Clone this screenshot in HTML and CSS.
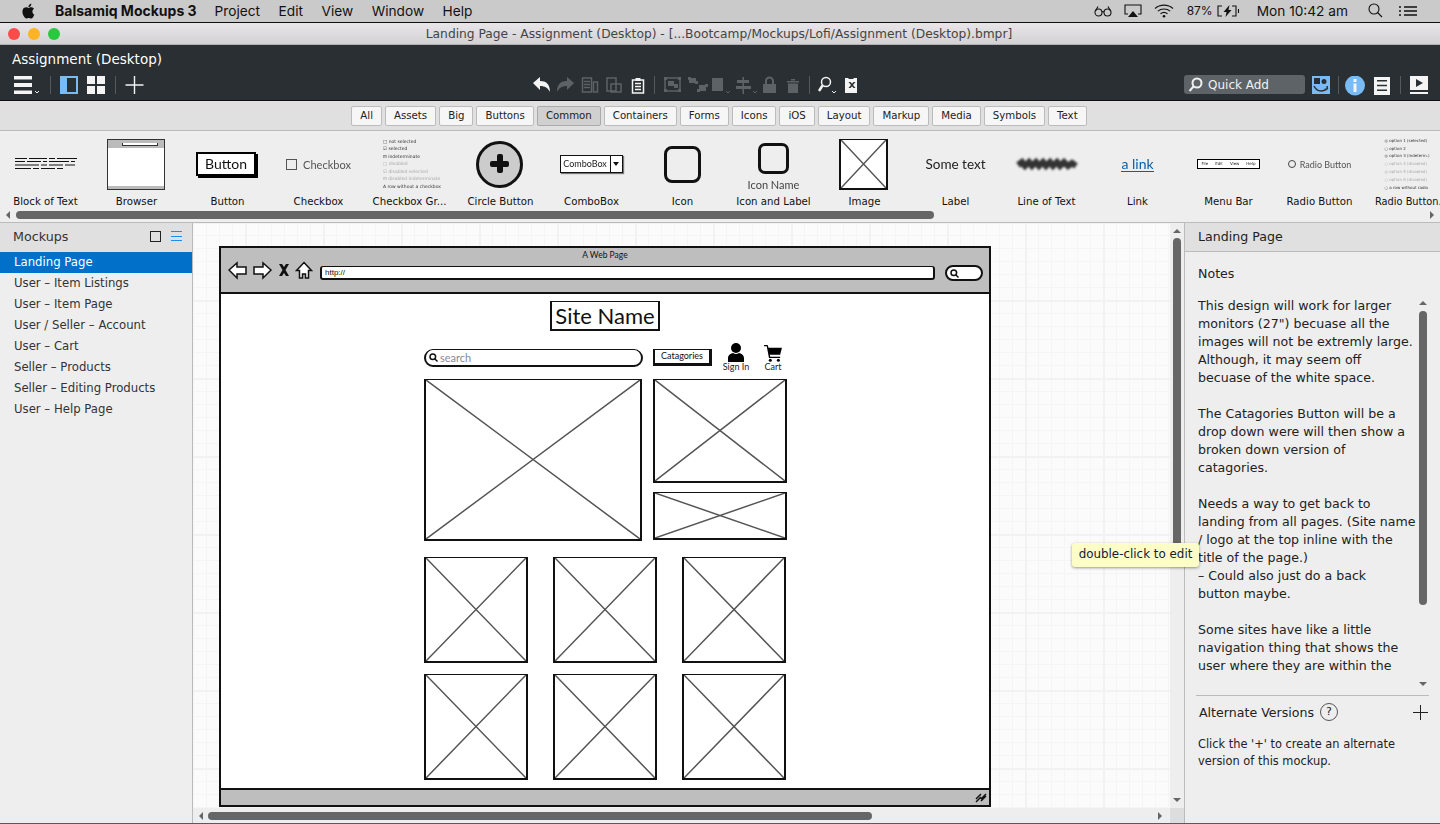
FILE: index.html
```html
<!DOCTYPE html>
<html lang="en">

<head>
    <meta charset="UTF-8">
    <meta name="viewport" content="width=device-width, initial-scale=1.0">
    <title>Balsamiq Mockups 3</title>
    <link rel="stylesheet" href="styles.css">
</head>

<body>
    <!-- Mac menu bar -->
    <div class="menubar">
        <svg class="apple" viewBox="0 0 14 16" width="14" height="16">
            <path d="M11.4 8.5c0-1.8 1.5-2.7 1.6-2.7-.9-1.3-2.2-1.5-2.7-1.5-1.1-.1-2.2.7-2.8.7-.6 0-1.5-.7-2.4-.7-1.3 0-2.4.7-3.1 1.8-1.3 2.3-.3 5.7 1 7.5.6.9 1.4 1.9 2.3 1.9.9 0 1.3-.6 2.4-.6 1.1 0 1.4.6 2.4.6 1 0 1.6-.9 2.2-1.8.7-1 1-2 1-2.1-.1 0-1.9-.7-1.9-3.1zM9.6 3.1c.5-.6.8-1.5.7-2.3-.7 0-1.6.5-2.1 1.1-.5.5-.9 1.4-.8 2.2.8.1 1.7-.4 2.2-1z" />
        </svg>
        <span class="menu-app">Balsamiq Mockups 3</span>
        <span class="menu-item">Project</span>
        <span class="menu-item">Edit</span>
        <span class="menu-item">View</span>
        <span class="menu-item">Window</span>
        <span class="menu-item">Help</span>
        <div class="menu-right">
            <svg width="18" height="12" viewBox="0 0 18 12" class="tray-svg">
                <circle cx="4.5" cy="7.5" r="3.5" />
                <circle cx="13.5" cy="7.5" r="3.5" />
                <path d="M8 7c.6-.6 1.4-.6 2 0M1.5 6L4 1.5M16.5 6L14 1.5" />
            </svg>
            <svg width="18" height="14" viewBox="0 0 18 14" class="tray-svg airplay">
                <path d="M4 10H1V1h16v9h-3" />
                <path class="solid" d="M9 7l5 6H4z" />
            </svg>
            <svg width="20" height="14" viewBox="0 0 20 14" class="tray-svg wifi">
                <path d="M1 4.5c5-4.5 13-4.5 18 0M3.8 7.2c3.5-3 8.9-3 12.4 0M6.5 9.8c2-1.6 5-1.6 7 0" />
                <circle class="solid" cx="10" cy="12.3" r="1.3" />
            </svg>
            <span class="battery-text">87%</span>
            <svg width="23" height="12" viewBox="0 0 23 12" class="tray-svg battery">
                <path d="M5 1H1v10h4M15 1h4v10h-4M21.5 4v4" />
                <path class="solid" d="M12.5 0L6.5 7h3l-1 5 6-7h-3z" />
            </svg>
            <span class="clock">Mon 10:42 am</span>
            <svg width="15" height="15" viewBox="0 0 15 15" class="tray-svg search-tray">
                <circle cx="6" cy="6" r="5" />
                <path d="M9.5 9.5L14 14" />
            </svg>
            <svg width="18" height="10" viewBox="0 0 18 10" class="tray-svg list-tray">
                <path d="M5 1h13M5 5h13M5 9h13M0 1h2M0 5h2M0 9h2" />
            </svg>
        </div>
    </div>

    <!-- Window title -->
    <div class="titlebar">
        <span class="light red"></span>
        <span class="light yellow"></span>
        <span class="light green"></span>
        <span class="title-text">Landing Page - Assignment (Desktop) - [...Bootcamp/Mockups/Lofi/Assignment (Desktop).bmpr]</span>
    </div>

    <!-- Dark toolbar -->
    <div class="toolbar">
        <div class="project-name">Assignment (Desktop)</div>
        <div class="tool-row">
            <svg class="tools-left" width="130" height="20" viewBox="0 0 130 20">
                <path class="w" d="M0 0h18v3.5H0zM0 7h18v4H0zM0 14.5h18V18H0z" />
                <path class="chev" d="M21 15l2 2 2-2" />
                <path class="sep" d="M36.5 0v18M101.5 0v18" />
                <path class="blue" d="M46 0h18v18H46zM53 2v14h9V2z" fill-rule="evenodd" />
                <path class="w" d="M73 0h8v8h-8zM83 0h8v8h-8zM73 10h8v8h-8zM83 10h8v8h-8z" />
                <path class="w" d="M119.8 0h1.4v8.3h8.3v1.4h-8.3V18h-1.4V9.7h-8.3V8.3h8.3z" />
            </svg>
            <svg class="tools-center" width="328" height="20" viewBox="0 0 328 20">
                <path class="w" d="M0 7L7 1v4c6 0 10 3 10 11-2-4-5-6-10-6v4z" />
                <path class="g" d="M41 7l-7-6v4c-6 0-10 3-10 11 2-4 5-6 10-6v4z" />
                <path class="gs" d="M49.5 2h9v14h-9zM51 5.5h6M51 8.5h6M51 11.5h6M60.5 6h4v10h-4z" />
                <path class="gs" d="M74 2h9v13h-9zM78 8h10v8H78z" />
                <path class="ws" d="M99.5 4h11v13h-11zM102 7.5h6M102 10.5h6M102 13.5h6" />
                <path class="w" d="M102.5 2h5v3h-5z" />
                <path class="sep" d="M121.5 0v18M276.5 0v18" />
                <path class="gs" d="M132 2h15v13h-15z" />
                <path class="g" d="M135 5h6v5h-6zM141 8h4v4h-4zM131 1h3v3h-3zM145 1h3v3h-3zM131 13h3v3h-3zM145 13h3v3h-3z" />
                <path class="g" d="M156 2h7v5h-7zM166 9h7v6h-7zM155 1h3v3h-3zM162 5h3v3h-3zM164 13h3v3h-3zM172 8h3v3h-3z" />
                <path class="g" d="M179 2h11v13h-11z" />
                <path class="chev dim" d="M193 15l2 2 2-2" />
                <path class="g" d="M209.5 1h1.5v17h-1.5zM204 4h12v3h-12zM203 10h15v3h-15z" />
                <path class="chev dim" d="M220 15l2 2 2-2" />
                <path class="g" d="M230 8h13v9h-13zM232 8V5a4.5 4.5 0 0 1 9 0v3h-2V5a2.5 2.5 0 0 0-5 0v3z" />
                <path class="g" d="M254 5h12v1.5h-12zM255 7.5h10V17h-10zM258 3h4v1.5h-4z" />
                <circle class="ws" cx="293" cy="6" r="4.5" />
                <path class="ws thick" d="M289.5 9.5L286 15" />
                <path class="chev" d="M299 15l2 2 2-2" />
                <path class="w" d="M312 2h3l1 1h4l1-1h3v15h-12zM315.5 6l2.5 3-2.5 3h2l1.5-1.8 1.5 1.8h2l-2.5-3 2.5-3h-2L319 7.8 317.5 6z" fill-rule="evenodd" />
            </svg>
            <div class="quick-add">
                <svg width="15" height="15" viewBox="0 0 15 15">
                    <circle cx="9" cy="6" r="4.5" />
                    <path d="M5.5 9.5L1.5 14" />
                </svg>
                <span>Quick Add</span>
            </div>
            <svg class="tools-right" width="116" height="20" viewBox="0 0 116 20">
                <path class="blue" d="M0 0h18v18H0z" />
                <path class="dark" d="M2 2h6v6H2zM12 3a2.5 2.5 0 1 1 0 5 2.5 2.5 0 0 1 0-5z" />
                <path class="darks" d="M2 10c3 6 8 6 13 3M15.5 13l-.5-3M15.5 13l-3 .5" />
                <path class="sep" d="M26.5 0v18M88.5 0v18" />
                <circle class="blue" cx="43" cy="9.5" r="10" />
                <path class="w" d="M41.5 3h3v3h-3zM41.5 7.5h3V16h-3z" />
                <path class="w" fill-rule="evenodd" d="M62 1h16v18H62zM65 4v1.500h10V4zM65 8.800v1.500h10V8.800zM65 13.500V15h10v-1.500z" />
                <path class="w" fill-rule="evenodd" d="M98 0h18v14H98zM104 3v8l7-4zM98 16h18v2H98z" />
            </svg>
        </div>
    </div>

    <!-- Library filter tabs -->
    <div class="filters">
        <button class="tab">All</button>
        <button class="tab">Assets</button>
        <button class="tab">Big</button>
        <button class="tab">Buttons</button>
        <button class="tab active">Common</button>
        <button class="tab">Containers</button>
        <button class="tab">Forms</button>
        <button class="tab">Icons</button>
        <button class="tab">iOS</button>
        <button class="tab">Layout</button>
        <button class="tab">Markup</button>
        <button class="tab">Media</button>
        <button class="tab">Symbols</button>
        <button class="tab">Text</button>
    </div>

    <!-- Component library -->
    <div class="library">
        <div class="lib-row">
            <div class="lib-item">
                <div class="thumb">
                    <svg width="62" height="14" viewBox="0 0 62 14" class="text-block">
                        <path d="M0 1.5h12M14 1.5h18M34 1.5h6M42 1.5h20M0 4.5h10M12 4.5h14M28 4.5h4M34 4.5h20M56 4.5h4M0 8h24M26 8h6M34 8h14M50 8h10M0 11.5h16M18 11.5h6M26 11.5h14M42 11.5h6" />
                    </svg>
                </div>
                <div class="lib-name">Block of Text</div>
            </div>
            <div class="lib-item">
                <div class="thumb">
                    <div class="mini-browser"><div class="mini-url"></div></div>
                </div>
                <div class="lib-name">Browser</div>
            </div>
            <div class="lib-item">
                <div class="thumb">
                    <div class="mini-button">Button</div>
                </div>
                <div class="lib-name">Button</div>
            </div>
            <div class="lib-item">
                <div class="thumb">
                    <div class="mini-check"><span class="mini-box"></span>Checkbox</div>
                </div>
                <div class="lib-name">Checkbox</div>
            </div>
            <div class="lib-item">
                <div class="thumb">
                    <ul class="mini-list">
                        <li>&#9633; not selected</li>
                        <li>&#9745; selected</li>
                        <li>&#8863; indeterminate</li>
                        <li class="faded">&#9633; disabled</li>
                        <li class="faded">&#9745; disabled selected</li>
                        <li class="faded">&#8863; disabled indeterminate</li>
                        <li>A row without a checkbox</li>
                    </ul>
                </div>
                <div class="lib-name">Checkbox Gr...</div>
            </div>
            <div class="lib-item">
                <div class="thumb">
                    <div class="mini-circle"></div>
                </div>
                <div class="lib-name">Circle Button</div>
            </div>
            <div class="lib-item">
                <div class="thumb">
                    <div class="mini-combo"><span class="combo-text">ComboBox</span><span class="combo-arrow"></span></div>
                </div>
                <div class="lib-name">ComboBox</div>
            </div>
            <div class="lib-item">
                <div class="thumb">
                    <div class="mini-icon"></div>
                </div>
                <div class="lib-name">Icon</div>
            </div>
            <div class="lib-item">
                <div class="thumb thumb-col">
                    <div class="mini-icon small"></div>
                    <div class="mini-icon-label">Icon Name</div>
                </div>
                <div class="lib-name">Icon and Label</div>
            </div>
            <div class="lib-item">
                <div class="thumb">
                    <div class="wire-img mini-image">
                        <svg viewBox="0 0 100 100" preserveAspectRatio="none"><path d="M0 0L100 100M100 0L0 100" /></svg>
                    </div>
                </div>
                <div class="lib-name">Image</div>
            </div>
            <div class="lib-item">
                <div class="thumb"><span class="mini-label">Some text</span></div>
                <div class="lib-name">Label</div>
            </div>
            <div class="lib-item">
                <div class="thumb">
                    <svg width="62" height="12" viewBox="0 0 62 12" class="scribble">
                        <path d="M2 7l4-3 3 4 4-4 3 4 4-4 3 4 4-4 3 4 4-4 3 4 4-4 3 4 4-4 4 4 4-3 4 3" />
                    </svg>
                </div>
                <div class="lib-name">Line of Text</div>
            </div>
            <div class="lib-item">
                <div class="thumb"><span class="mini-link">a link</span></div>
                <div class="lib-name">Link</div>
            </div>
            <div class="lib-item">
                <div class="thumb">
                    <div class="mini-menu"><span>File</span><span>Edit</span><span>View</span><span>Help</span></div>
                </div>
                <div class="lib-name">Menu Bar</div>
            </div>
            <div class="lib-item">
                <div class="thumb">
                    <div class="mini-radio"><span class="mini-dot"></span>Radio Button</div>
                </div>
                <div class="lib-name">Radio Button</div>
            </div>
            <div class="lib-item lib-last">
                <div class="thumb">
                    <ul class="mini-list radios">
                        <li>&#9678; option 1 (selected)</li>
                        <li>&#9675; option 2</li>
                        <li>&#9678; option 3 (indeterm.)</li>
                        <li class="faded">&#9675; option 4 (disabled)</li>
                        <li class="faded">&#9678; option 5 (disabled)</li>
                        <li class="faded">&#9675; option 6 (disabled)</li>
                        <li>&#9675; a row without radio</li>
                    </ul>
                </div>
                <div class="lib-name">Radio Button.</div>
            </div>
        </div>
        <div class="lib-scroll">
            <span class="arrow-left"></span>
            <div class="lib-thumb"></div>
            <span class="arrow-right"></span>
        </div>
    </div>

    <div class="main">
        <!-- Mockups list -->
        <div class="sidebar">
            <div class="side-head">
                <span>Mockups</span>
                <span class="view-box"></span>
                <span class="view-list"></span>
            </div>
            <div class="mock-row selected">Landing Page</div>
            <div class="mock-row">User – Item Listings</div>
            <div class="mock-row">User – Item Page</div>
            <div class="mock-row">User / Seller – Account</div>
            <div class="mock-row">User – Cart</div>
            <div class="mock-row">Seller – Products</div>
            <div class="mock-row">Seller – Editing Products</div>
            <div class="mock-row">User – Help Page</div>
        </div>

        <!-- Canvas with the wireframe -->
        <div class="canvas-wrap">
            <div class="canvas">
                <div class="wire-browser">
                    <div class="wire-top">
                        <div class="wire-title">A Web Page</div>
                        <div class="wire-nav">
                            <svg width="86" height="20" viewBox="0 0 86 20" class="wire-nav-icons">
                                <path d="M1 9l8-7v4h9v7H9v4z" />
                                <path d="M43 9l-8-7v4h-9v7h9v4z" />
                                <path class="solid" d="M51 3h3l2 3 2-3h3l-3.5 6 3.5 6h-3l-2-3-2 3h-3l3.5-6z" />
                                <path d="M76 1.5l7.5 8h-3V17h-3v-4h-3v4h-3V9.5h-3z" />
                            </svg>
                            <div class="wire-url">http://</div>
                            <div class="wire-find">
                                <svg width="9" height="9" viewBox="0 0 9 9">
                                    <circle cx="3.8" cy="3.8" r="2.8" />
                                    <path d="M6 6l2.5 2.5" />
                                </svg>
                            </div>
                        </div>
                    </div>
                    <div class="wire-body"></div>
                    <div class="wire-foot">
                        <svg width="12" height="10" viewBox="0 0 12 10">
                            <path d="M1 6l5-5M1 9l5-5M6 8l5-5M6 6l5-5" />
                        </svg>
                    </div>
                </div>

                <div class="site-name">Site Name</div>
                <div class="wire-search">
                    <svg width="9" height="9" viewBox="0 0 9 9">
                        <circle cx="3.8" cy="3.8" r="2.8" />
                        <path d="M6 6l2.5 2.5" />
                    </svg>
                    <span>search</span>
                </div>
                <div class="wire-cat">Catagories</div>
                <div class="wire-link sign-in">
                    <svg width="18" height="19" viewBox="0 0 18 19">
                        <circle cx="9" cy="5" r="5" />
                        <path d="M1 19v-4c0-3 3-4.5 5-5 2 1.3 4 1.3 6 0 2 .5 5 2 5 5v4z" />
                    </svg>
                    <span>Sign In</span>
                </div>
                <div class="wire-link cart">
                    <svg width="20" height="17" viewBox="0 0 20 19">
                        <path d="M0 0h4l1 3h15l-2 8H6.5l.4 2H18v1.5H5.5L3 1.5H0z" />
                        <circle cx="7" cy="17" r="1.7" />
                        <circle cx="16" cy="17" r="1.7" />
                    </svg>
                    <span>Cart</span>
                </div>

                <div class="wire-img hero"><svg viewBox="0 0 100 100" preserveAspectRatio="none"><path d="M0 0L100 100M100 0L0 100" /></svg></div>
                <div class="wire-img side-a"><svg viewBox="0 0 100 100" preserveAspectRatio="none"><path d="M0 0L100 100M100 0L0 100" /></svg></div>
                <div class="wire-img side-b"><svg viewBox="0 0 100 100" preserveAspectRatio="none"><path d="M0 0L100 100M100 0L0 100" /></svg></div>

                <div class="wire-grid">
                    <div class="wire-img"><svg viewBox="0 0 100 100" preserveAspectRatio="none"><path d="M0 0L100 100M100 0L0 100" /></svg></div>
                    <div class="wire-img"><svg viewBox="0 0 100 100" preserveAspectRatio="none"><path d="M0 0L100 100M100 0L0 100" /></svg></div>
                    <div class="wire-img"><svg viewBox="0 0 100 100" preserveAspectRatio="none"><path d="M0 0L100 100M100 0L0 100" /></svg></div>
                    <div class="wire-img"><svg viewBox="0 0 100 100" preserveAspectRatio="none"><path d="M0 0L100 100M100 0L0 100" /></svg></div>
                    <div class="wire-img"><svg viewBox="0 0 100 100" preserveAspectRatio="none"><path d="M0 0L100 100M100 0L0 100" /></svg></div>
                    <div class="wire-img"><svg viewBox="0 0 100 100" preserveAspectRatio="none"><path d="M0 0L100 100M100 0L0 100" /></svg></div>
                </div>
            </div>
            <div class="v-scroll">
                <span class="arrow-up"></span>
                <div class="v-thumb"></div>
                <span class="arrow-down"></span>
            </div>
            <div class="h-scroll">
                <span class="arrow-left"></span>
                <div class="h-thumb"></div>
                <span class="arrow-right"></span>
            </div>
            <div class="corner"></div>
            <div class="tooltip">double-click to edit</div>
        </div>

        <!-- Notes panel -->
        <div class="notes">
            <div class="notes-head">Landing Page</div>
            <div class="notes-title">Notes</div>
            <div class="notes-box">
                <div class="notes-text">
                    <p>This design will work for larger<br>monitors (27") becuase all the<br>images will not be extremly large.<br>Although, it may seem off<br>becuase of the white space.</p>
                    <p>The Catagories Button will be a<br>drop down were will then show a<br>broken down version of<br>catagories.</p>
                    <p>Needs a way to get back to<br>landing from all pages. (Site name<br>/ logo at the top inline with the<br>title of the page.)<br>– Could also just do a back<br>button maybe.</p>
                    <p>Some sites have like a little<br>navigation thing that shows the<br>user where they are within the</p>
                </div>
                <div class="notes-scroll">
                    <span class="arrow-up"></span>
                    <div class="notes-thumb"></div>
                    <span class="arrow-down"></span>
                </div>
            </div>
            <div class="alt-head">
                <span>Alternate Versions</span>
                <span class="help">?</span>
                <svg width="15" height="15" viewBox="0 0 15 15"><path d="M7.5 0v15M0 7.5h15" /></svg>
            </div>
            <div class="alt-text">Click the '+' to create an alternate<br>version of this mockup.</div>
        </div>
    </div>
</body>

</html>
```

FILE: styles.css
```css
* {
    box-sizing: border-box;
}

html,
body {
    margin: 0;
    height: 824px;
    overflow: hidden;
}

body {
    display: flex;
    flex-direction: column;
    font-family: "DejaVu Sans", "Open Sans", sans-serif;
    font-size: 11px;
    color: #222;
    background-color: rgb(238, 238, 238);
    border-bottom: 1px solid #1c6aa8;
}

/* menu bar */
.menubar {
    height: 23px;
    flex: none;
    display: flex;
    align-items: center;
    background-color: rgb(203, 202, 202);
    border-bottom: 1px solid #111;
    font-family: Inter, sans-serif;
    font-size: 14px;
    color: #111;
    padding: 0 0 1px 21px;
}

.apple {
    fill: #111;
    margin-right: 20px;
}

.menu-app {
    font-weight: 700;
    margin-right: 18px;
}

.menu-item {
    font-size: 13.7px;
    margin-right: 18.5px;
}

.menu-right {
    margin-left: auto;
    display: flex;
    align-items: center;
    padding-right: 23px;
}

.tray-svg {
    fill: none;
    stroke: #111;
    stroke-width: 1.1;
}

.tray-svg .solid {
    fill: #111;
    stroke: none;
}

.airplay {
    margin-left: 12px;
}

.wifi {
    margin-left: 12px;
}

.battery-text {
    font-size: 12px;
    margin-left: 13px;
}

.battery {
    margin-left: 4px;
}

.clock {
    font-size: 13.7px;
    margin-left: 17px;
}

.search-tray {
    margin-left: 20px;
}

.list-tray {
    margin-left: 16px;
    stroke-width: 1.5;
}

/* window title */
.titlebar {
    height: 22px;
    flex: none;
    display: flex;
    align-items: center;
    gap: 8px;
    padding-left: 8px;
    background: linear-gradient(#e8e6e8, #d3d1d3);
    border-bottom: 1px solid #b0b0b0;
}

.light {
    width: 12px;
    height: 12px;
    border-radius: 50%;
}

.red {
    background-color: #fc4c4a;
}

.yellow {
    background-color: #fdb324;
}

.green {
    background-color: #2ac83f;
}

.title-text {
    flex: 1;
    text-align: center;
    font-size: 12.25px;
    color: #444;
    margin-right: 70px;
    white-space: nowrap;
}

/* dark toolbar */
.toolbar {
    height: 56px;
    flex: none;
    background-color: rgb(41, 47, 51);
    border-bottom: 1px solid #111;
    padding: 5px 12px 0 14px;
}

.project-name {
    color: #fff;
    font-size: 13.5px;
    line-height: 19px;
    margin-left: -2px;
}

.tool-row {
    display: flex;
    align-items: flex-start;
    margin-top: 7px;
}

.tool-row svg {
    flex: none;
}

.tools-center {
    margin-left: 389px;
}

.tool-row .w {
    fill: #f4f4f4;
}

.tool-row .g {
    fill: #5d6266;
}

.tool-row .gs {
    fill: none;
    stroke: #5d6266;
    stroke-width: 1.5;
}

.tool-row .ws {
    fill: none;
    stroke: #f4f4f4;
    stroke-width: 1.5;
}

.tool-row .thick {
    stroke-width: 2.5;
}

.tool-row .sep {
    stroke: #555a5e;
    fill: none;
}

.tool-row .chev {
    stroke: #eee;
    fill: none;
}

.tool-row .dim {
    stroke: #5d6266;
}

.tool-row .blue {
    fill: #79bcf5;
}

.tool-row .dark {
    fill: #292f33;
}

.tool-row .darks {
    fill: none;
    stroke: #292f33;
    stroke-width: 1.5;
}

.quick-add {
    margin-left: auto;
    margin-right: 7px;
    width: 121px;
    height: 19px;
    display: flex;
    align-items: center;
    gap: 5px;
    padding-left: 4px;
    background-color: #5d6367;
    border-radius: 3px;
    color: #f2f2f2;
    font-size: 12px;
    margin-top: -1px;
}

.quick-add svg {
    fill: none;
    stroke: #f2f2f2;
    stroke-width: 2;
}

/* filter tabs */
.filters {
    height: 30px;
    flex: none;
    display: flex;
    justify-content: center;
    align-items: center;
    gap: 3px;
    padding-right: 2px;
    background-color: rgb(224, 224, 224);
    border-bottom: 1px solid #bbb;
}

.tab {
    height: 20px;
    padding: 0 8px;
    border: 1px solid #bcbcbc;
    border-radius: 2px;
    background-color: #f6f6f6;
    font-family: inherit;
    font-size: 10.2px;
    color: #222;
}

.tab.active {
    background-color: #d0d0d0;
    border-color: #aaa;
}

/* library */
.library {
    height: 92px;
    flex: none;
    background-color: rgb(238, 238, 238);
    border-bottom: 1px solid #bbb;
    overflow: hidden;
}

.lib-row {
    display: flex;
    height: 80px;
}

.lib-item {
    flex: 0 0 91px;
    width: 91px;
    display: flex;
    flex-direction: column;
    align-items: center;
    padding-top: 6px;
}

.lib-last {
    flex-basis: 75px;
    width: 75px;
    align-items: flex-start;
    padding-left: 10px;
}

.lib-last .lib-name {
    font-size: 9.8px;
}

.thumb {
    height: 54px;
    margin-bottom: 3px;
    display: flex;
    align-items: center;
    justify-content: center;
    overflow: hidden;
    width: 100%;
    filter: blur(0.35px);
}

.thumb-col {
    flex-direction: column;
    gap: 5px;
    padding-top: 4px;
}

.lib-name {
    font-size: 10.2px;
    line-height: 16px;
    white-space: nowrap;
    color: #111;
}

.text-block {
    stroke: #111;
    stroke-width: 1.1;
    fill: none;
}

.mini-browser {
    position: relative;
    width: 58px;
    height: 51px;
    margin-left: -2px;
    background: linear-gradient(#bbb 8px, #fff 8px, #fff 46px, #bbb 46px);
    border: 1px solid #333;
}

.mini-url {
    position: absolute;
    left: 14px;
    top: 3px;
    width: 36px;
    height: 3px;
    background-color: #fff;
    border: 1px solid #333;
    border-width: 0 1px 1px;
}

.mini-button {
    width: 60px;
    height: 24px;
    margin-left: -3px;
    border: 2px solid #000;
    box-shadow: 2px 2px 0 #000;
    background-color: #fff;
    text-align: center;
    font-family: Lato, sans-serif;
    font-size: 14px;
    line-height: 19px;
    color: #111;
}

.mini-check,
.mini-radio {
    display: flex;
    align-items: center;
    gap: 6px;
    font-family: Lato, sans-serif;
    font-size: 11px;
    color: #555;
}

.mini-box {
    width: 11px;
    height: 11px;
    border: 1px solid #555;
}

.mini-list {
    margin: 0;
    padding: 0;
    list-style: none;
    width: 55px;
    margin-left: 2px;
    font-size: 4.5px;
    line-height: 7.5px;
    white-space: nowrap;
    color: #333;
}

.mini-list .faded {
    color: #aaa;
}

.mini-list.radios {
    width: 46px;
    margin-left: 0;
    font-size: 4px;
    line-height: 7.8px;
}

.mini-circle {
    position: relative;
    width: 47px;
    height: 47px;
    margin-left: -2px;
    border: 3px solid #111;
    border-radius: 50%;
    background-color: #ccc;
}

.mini-circle::before,
.mini-circle::after {
    content: "";
    position: absolute;
    background-color: #111;
    left: 11px;
    top: 17px;
    width: 19px;
    height: 6px;
    border-radius: 2px;
}

.mini-circle::after {
    left: 17.5px;
    top: 10.5px;
    width: 6px;
    height: 19px;
}

.mini-combo {
    display: flex;
    width: 63px;
    height: 18px;
    margin-left: -1px;
    border: 1px solid #111;
    box-shadow: 1px 1px 1px #777;
    background-color: #fff;
}

.combo-text {
    flex: 1;
    font-family: Lato, sans-serif;
    font-size: 9px;
    line-height: 15px;
    text-align: center;
}

.combo-arrow {
    position: relative;
    width: 12px;
    border-left: 1px solid #111;
}

.combo-arrow::after {
    content: "";
    position: absolute;
    left: 2px;
    top: 6px;
    border: 3px solid transparent;
    border-top: 4px solid #111;
}

.mini-icon {
    width: 37px;
    height: 37px;
    margin-left: -1px;
    flex: none;
    border: 3px solid #111;
    border-radius: 8px;
}

.mini-icon.small {
    width: 31px;
    height: 31px;
    border-radius: 7px;
}

.mini-icon-label {
    font-family: Lato, sans-serif;
    font-size: 11px;
    line-height: 11px;
    color: #444;
}

.mini-image {
    width: 49px;
    height: 51px;
    margin-left: -3px;
}

.mini-label {
    font-family: Lato, sans-serif;
    font-size: 13.5px;
    color: #222;
    white-space: nowrap;
}

.scribble {
    fill: none;
    stroke: #333;
    stroke-width: 6;
    filter: blur(0.8px);
}

.mini-link {
    font-family: Lato, sans-serif;
    font-size: 14px;
    color: #0b5fa5;
    border-bottom: 1px solid #0b5fa5;
    line-height: 15px;
}

.mini-menu {
    display: flex;
    justify-content: space-around;
    width: 63px;
    height: 10px;
    border: 1.5px solid #000;
    font-size: 4px;
    line-height: 7px;
    background-color: #fff;
}

.mini-radio {
    gap: 4px;
    font-size: 9px;
}

.mini-dot {
    width: 8px;
    height: 8px;
    border: 1px solid #444;
    border-radius: 50%;
}

/* scrollbars */
.lib-scroll {
    height: 12px;
    position: relative;
}

.lib-thumb {
    position: absolute;
    left: 16px;
    top: 0;
    width: 918px;
    height: 8px;
    border-radius: 4px;
    background-color: #666;
}

.arrow-left,
.arrow-right,
.arrow-up,
.arrow-down {
    position: absolute;
    width: 0;
    height: 0;
    border: 4px solid transparent;
}

.arrow-left {
    border-right: 4px solid #666;
    left: 2px;
    top: 0;
}

.arrow-right {
    border-left: 4px solid #666;
    right: 2px;
    top: 0;
}

.arrow-up {
    border-bottom: 4px solid #666;
    top: 0;
    left: 0;
}

.arrow-down {
    border-top: 4px solid #666;
    bottom: 0;
    left: 0;
}

/* main area */
.main {
    flex: 1;
    display: flex;
    min-height: 0;
}

.sidebar {
    width: 193px;
    flex: none;
    background-color: rgb(238, 238, 238);
    border-right: 1px solid #bbb;
    font-size: 11.7px;
}

.side-head {
    height: 29px;
    display: flex;
    align-items: center;
    padding: 0 10px 3px 13px;
    background-color: rgb(224, 224, 224);
    font-size: 12.7px;
    color: #333;
}

.view-box {
    width: 11px;
    height: 11px;
    border: 1px solid #222;
    margin-left: auto;
}

.view-list {
    width: 11px;
    height: 10px;
    margin-left: 10px;
    border-top: 1px solid #1b8ff0;
    border-bottom: 1px solid #1b8ff0;
    background: linear-gradient(#1b8ff0, #1b8ff0) center / 100% 1px no-repeat;
}

.mock-row {
    height: 21px;
    line-height: 20px;
    padding-left: 14px;
    color: #333;
}

.mock-row.selected {
    background-color: rgb(0, 112, 201);
    color: #fff;
}

/* canvas */
.canvas-wrap {
    position: relative;
    flex: 1;
    min-width: 0;
    background-color: rgb(238, 238, 238);
}

.canvas {
    position: absolute;
    left: 0;
    top: 0;
    right: 14px;
    bottom: 15px;
    background-color: #fbfbfb;
    background-image:
        linear-gradient(#f2f2f2 2px, transparent 2px),
        linear-gradient(90deg, #f2f2f2 2px, transparent 2px),
        linear-gradient(#f5f5f5 1.5px, transparent 1.5px),
        linear-gradient(90deg, #f5f5f5 1.5px, transparent 1.5px);
    background-size: 78px 78px, 78px 78px, 13px 13px, 13px 13px;
    background-position: 52px -1px, 52px -1px, 0 -1px, 0 -1px;
}

.v-scroll {
    position: absolute;
    right: 3px;
    top: 2px;
    bottom: 17px;
    width: 8px;
}

.v-thumb {
    position: absolute;
    top: 13px;
    height: 312px;
    width: 8px;
    border-radius: 4px;
    background-color: #666;
}

.h-scroll {
    position: absolute;
    left: 0;
    right: 14px;
    bottom: 0;
    height: 15px;
}

.h-scroll .arrow-left {
    left: 2px;
    top: 4px;
}

.h-scroll .arrow-right {
    right: 4px;
    top: 4px;
}

.h-thumb {
    position: absolute;
    left: 15px;
    top: 4px;
    width: 664px;
    height: 8px;
    border-radius: 4px;
    background-color: #666;
}

.corner {
    position: absolute;
    right: 0;
    bottom: 0;
    width: 14px;
    height: 15px;
    background-color: #ddd;
}

.tooltip {
    position: absolute;
    left: 879px;
    top: 320px;
    width: 127px;
    height: 24px;
    z-index: 2;
    background-color: #fdfdc8;
    box-shadow: 0 1px 3px rgba(0, 0, 0, 0.4);
    border-radius: 3px;
    font-size: 11.9px;
    text-align: center;
    line-height: 23px;
    white-space: nowrap;
    color: #123;
}

/* wireframe on the canvas */
.wire-browser {
    position: absolute;
    left: 26px;
    top: 23px;
    width: 772px;
    height: 561px;
    display: flex;
    flex-direction: column;
    border: 2px solid #111;
    background-color: #fff;
}

.wire-top {
    height: 46px;
    flex: none;
    background-color: #bebebe;
    border-bottom: 2px solid #111;
}

.wire-title {
    text-align: center;
    font-family: Lato, sans-serif;
    font-size: 8.5px;
    line-height: 14px;
    color: #111;
}

.wire-nav {
    display: flex;
    align-items: center;
    padding: 3px 0 0 7px;
}

.wire-nav-icons {
    fill: #fff;
    stroke: #111;
    stroke-width: 1.5;
    flex: none;
    margin-top: -4px;
}

.wire-nav-icons .solid {
    fill: #111;
    stroke: none;
}

.wire-url {
    width: 615px;
    height: 14px;
    margin-left: 6px;
    padding-left: 3px;
    border: 1px solid #111;
    border-width: 1px 2px 2px 2px;
    border-radius: 3px;
    background-color: #fff;
    font-family: "Liberation Sans", sans-serif;
    font-size: 8px;
    line-height: 11px;
    color: #111;
}

.wire-find {
    width: 38px;
    height: 16px;
    margin-left: 10px;
    padding: 2px 0 0 3px;
    border: 2px solid #111;
    border-radius: 8px;
    background-color: #fff;
}

.wire-find svg,
.wire-search svg {
    fill: none;
    stroke: #111;
    stroke-width: 1.5;
    display: block;
}

.wire-body {
    flex: 1;
}

.wire-foot {
    height: 17px;
    flex: none;
    display: flex;
    justify-content: flex-end;
    align-items: center;
    padding-right: 2px;
    background-color: #bebebe;
    border-top: 2px solid #111;
}

.wire-foot svg {
    stroke: #111;
    stroke-width: 1.5;
    fill: none;
}

.site-name {
    position: absolute;
    left: 357px;
    top: 78px;
    width: 110px;
    height: 30px;
    border: 2px solid #111;
    border-top-width: 1px;
    background-color: #fff;
    text-align: center;
    font-family: Lato, sans-serif;
    font-size: 22px;
    line-height: 27px;
    color: #111;
}

.wire-search {
    position: absolute;
    left: 231px;
    top: 126px;
    width: 219px;
    height: 18px;
    display: flex;
    align-items: center;
    gap: 2px;
    padding-left: 3px;
    border: 2px solid #111;
    border-top-width: 1px;
    border-radius: 9px;
    background-color: #fff;
    font-family: Lato, sans-serif;
    font-size: 11px;
    color: #889;
}

.wire-cat {
    position: absolute;
    left: 460px;
    top: 126px;
    width: 59px;
    height: 17px;
    border: 2px solid #111;
    border-top-width: 1px;
    border-bottom-width: 3px;
    border-right-width: 3px;
    background-color: #fff;
    text-align: center;
    font-family: Lato, sans-serif;
    font-size: 9px;
    line-height: 12px;
    color: #111;
}

.wire-link {
    position: absolute;
    top: 120px;
    display: flex;
    flex-direction: column;
    align-items: center;
    font-family: Lato, sans-serif;
    font-size: 9px;
    line-height: 10px;
    color: #222;
}

.sign-in {
    left: 528px;
    width: 30px;
}

.cart {
    left: 567px;
    width: 26px;
}

.cart svg {
    margin-top: 2px;
}

.wire-img {
    position: relative;
    border: 2px solid #111;
    border-width: 1.5px 2px 2px 2px;
    background-color: #fff;
}

.wire-img svg {
    position: absolute;
    inset: 0;
    width: 100%;
    height: 100%;
    display: block;
}

.wire-img path {
    stroke: #555;
    stroke-width: 1.5;
    fill: none;
    vector-effect: non-scaling-stroke;
}

.hero {
    position: absolute;
    left: 231px;
    top: 156px;
    width: 218px;
    height: 162px;
}

.side-a {
    position: absolute;
    left: 460px;
    top: 156px;
    width: 134px;
    height: 104px;
}

.side-b {
    position: absolute;
    left: 460px;
    top: 269px;
    width: 134px;
    height: 48px;
}

.wire-grid {
    position: absolute;
    left: 231px;
    top: 334px;
    display: grid;
    grid-template-columns: repeat(3, 104px);
    grid-auto-rows: 106px;
    column-gap: 25px;
    row-gap: 11px;
}

/* notes panel */
.notes {
    width: 256px;
    flex: none;
    background-color: rgb(238, 238, 238);
    border-left: 1px solid #bbb;
    font-size: 12.6px;
    color: #222;
}

.notes-head {
    height: 29px;
    line-height: 28px;
    padding-left: 13px;
    background-color: rgb(224, 224, 224);
    border-bottom: 1px solid #bbb;
}

.notes-title {
    padding: 13px 0 0 13px;
    line-height: 18px;
}

.notes-box {
    position: relative;
    height: 399px;
    margin: 14px 11px 0 11px;
    padding-left: 2px;
    overflow: hidden;
    border-bottom: 1px solid #bbb;
}

.notes-text {
    line-height: 18px;
    white-space: nowrap;
}

.notes-text p {
    margin: 0 0 18px;
}

.notes-scroll {
    position: absolute;
    right: 2px;
    top: 0;
    bottom: 0;
    width: 8px;
}

.notes-thumb {
    position: absolute;
    top: 14px;
    height: 294px;
    width: 8px;
    border-radius: 4px;
    background-color: #666;
}

.notes-scroll .arrow-down {
    bottom: 5px;
}

.alt-head {
    display: flex;
    align-items: center;
    gap: 6px;
    height: 34px;
    padding: 0 12px 2px 14px;
}

.help {
    width: 18px;
    height: 18px;
    border: 1px solid #555;
    border-radius: 50%;
    text-align: center;
    line-height: 16px;
    font-size: 11px;
}

.alt-head svg {
    margin-left: auto;
    stroke: #222;
    fill: none;
}

.alt-text {
    padding: 6px 0 0 13px;
    line-height: 17px;
    font-size: 11.4px;
}
```
